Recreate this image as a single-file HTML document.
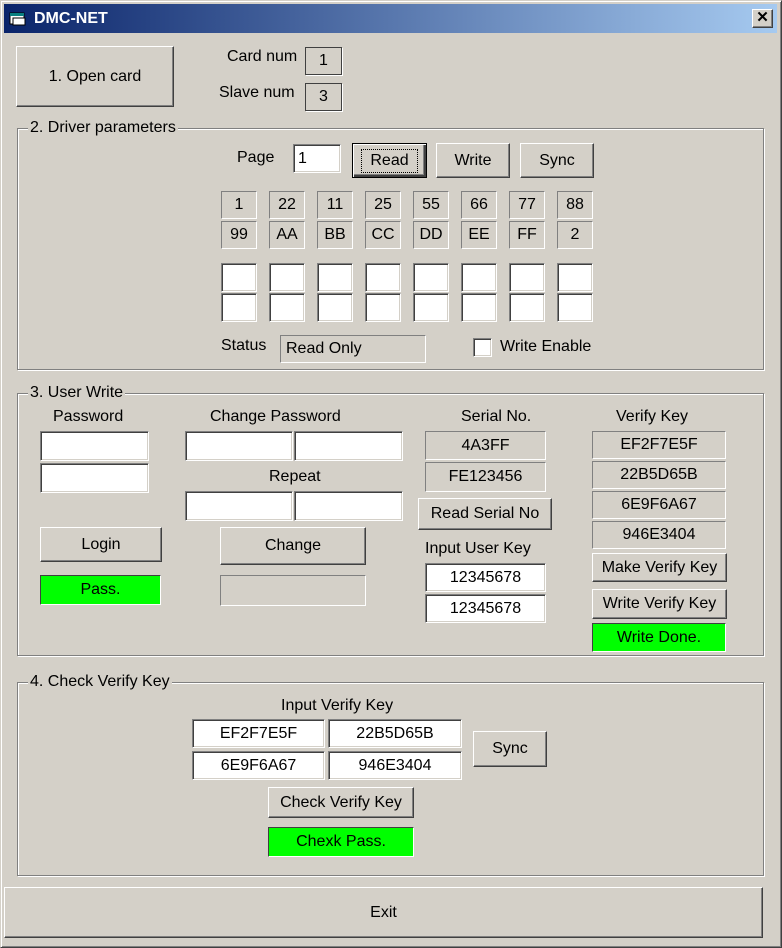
<!DOCTYPE html>
<html><head><meta charset="utf-8"><style>
*{box-sizing:border-box;margin:0;padding:0}
body{width:782px;height:948px;background:#d4d0c8;font-family:"Liberation Sans",Arial,sans-serif;font-size:16px;color:#000;position:relative;overflow:hidden}
.a{position:absolute}
.win{left:0;top:0;width:782px;height:948px;border:1px solid #d4d0c8;border-right-color:#404040;border-bottom-color:#404040;box-shadow:inset 1px 1px #fff,inset -1px -1px #808080}
.title{left:4px;top:4px;width:773px;height:29px;background:linear-gradient(90deg,#0a246a,#a6caf0);color:#fff;font-weight:bold;font-size:16px;line-height:29px;padding-left:30px}
.close{left:752px;top:9px;width:21px;height:19px;background:#d4d0c8;border:1px solid #fff;border-right-color:#404040;border-bottom-color:#404040;box-shadow:inset -1px -1px #808080;text-align:center;font-weight:bold;font-size:15px;line-height:16px;color:#000}
.btn{border:1px solid #fff;border-right-color:#404040;border-bottom-color:#404040;box-shadow:inset -1px -1px #808080;display:flex;align-items:center;justify-content:center}
.def{border:1px solid #000;box-shadow:inset 1px 1px #fff,inset -2px -2px #404040,inset -3px -3px #808080}
.st{border:1px solid #808080;border-right-color:#fff;border-bottom-color:#fff;display:flex;align-items:center;justify-content:center}
.ed{background:#fff;border:1px solid #808080;border-right-color:#fff;border-bottom-color:#fff;box-shadow:inset 1px 1px #404040,inset -1px -1px #d4d0c8;display:flex;align-items:center;justify-content:center}
.g{border:1px solid #808080;box-shadow:inset 1px 1px #fff,1px 1px #fff}
.lg{background:#d4d0c8;padding:0 2px;line-height:18px}
.grn{background:#00ff00}
</style></head><body>
<div class="a win"></div>
<div class="a title">DMC-NET</div>
<svg class="a" style="left:9px;top:11px" width="18" height="15"><rect x="1" y="2" width="14" height="11" fill="#fff" stroke="#000"/><rect x="1" y="2" width="14" height="3" fill="#0a8080"/><rect x="4" y="7" width="12" height="7" fill="#fff" stroke="#000"/></svg>
<div class="a close">✕</div>

<div class="a btn" style="left:16px;top:46px;width:158px;height:61px">1. Open card</div>
<div class="a" style="left:227px;top:48px">Card num</div>
<div class="a st" style="left:305px;top:47px;width:37px;height:28px;border:1px solid #404040;box-shadow:1px 1px #fff">1</div>
<div class="a" style="left:219px;top:84px">Slave num</div>
<div class="a st" style="left:305px;top:83px;width:37px;height:28px;border:1px solid #404040;box-shadow:1px 1px #fff">3</div>

<!-- group 2 -->
<div class="a g" style="left:17px;top:128px;width:747px;height:242px"></div>
<div class="a lg" style="left:28px;top:119px">2. Driver parameters</div>
<div class="a" style="left:237px;top:149px">Page</div>
<div class="a ed" style="left:293px;top:144px;width:48px;height:29px;justify-content:flex-start;padding-left:4px">1</div>
<div class="a btn def" style="left:352px;top:143px;width:75px;height:35px"><span style="border:1px dotted #000;padding:2px 8px">Read</span></div>
<div class="a btn" style="left:436px;top:143px;width:74px;height:35px">Write</div>
<div class="a btn" style="left:520px;top:143px;width:74px;height:35px">Sync</div>

<div class="a st" style="left:221px;top:191px;width:36px;height:28px">1</div>
<div class="a st" style="left:269px;top:191px;width:36px;height:28px">22</div>
<div class="a st" style="left:317px;top:191px;width:36px;height:28px">11</div>
<div class="a st" style="left:365px;top:191px;width:36px;height:28px">25</div>
<div class="a st" style="left:413px;top:191px;width:36px;height:28px">55</div>
<div class="a st" style="left:461px;top:191px;width:36px;height:28px">66</div>
<div class="a st" style="left:509px;top:191px;width:36px;height:28px">77</div>
<div class="a st" style="left:557px;top:191px;width:36px;height:28px">88</div>
<div class="a st" style="left:221px;top:221px;width:36px;height:28px">99</div>
<div class="a st" style="left:269px;top:221px;width:36px;height:28px">AA</div>
<div class="a st" style="left:317px;top:221px;width:36px;height:28px">BB</div>
<div class="a st" style="left:365px;top:221px;width:36px;height:28px">CC</div>
<div class="a st" style="left:413px;top:221px;width:36px;height:28px">DD</div>
<div class="a st" style="left:461px;top:221px;width:36px;height:28px">EE</div>
<div class="a st" style="left:509px;top:221px;width:36px;height:28px">FF</div>
<div class="a st" style="left:557px;top:221px;width:36px;height:28px">2</div>

<div class="a ed" style="left:221px;top:263px;width:36px;height:29px"></div>
<div class="a ed" style="left:269px;top:263px;width:36px;height:29px"></div>
<div class="a ed" style="left:317px;top:263px;width:36px;height:29px"></div>
<div class="a ed" style="left:365px;top:263px;width:36px;height:29px"></div>
<div class="a ed" style="left:413px;top:263px;width:36px;height:29px"></div>
<div class="a ed" style="left:461px;top:263px;width:36px;height:29px"></div>
<div class="a ed" style="left:509px;top:263px;width:36px;height:29px"></div>
<div class="a ed" style="left:557px;top:263px;width:36px;height:29px"></div>
<div class="a ed" style="left:221px;top:293px;width:36px;height:29px"></div>
<div class="a ed" style="left:269px;top:293px;width:36px;height:29px"></div>
<div class="a ed" style="left:317px;top:293px;width:36px;height:29px"></div>
<div class="a ed" style="left:365px;top:293px;width:36px;height:29px"></div>
<div class="a ed" style="left:413px;top:293px;width:36px;height:29px"></div>
<div class="a ed" style="left:461px;top:293px;width:36px;height:29px"></div>
<div class="a ed" style="left:509px;top:293px;width:36px;height:29px"></div>
<div class="a ed" style="left:557px;top:293px;width:36px;height:29px"></div>

<div class="a" style="left:221px;top:337px">Status</div>
<div class="a st" style="left:280px;top:335px;width:146px;height:28px;justify-content:flex-start;padding-left:5px">Read Only</div>
<div class="a ed" style="left:473px;top:338px;width:19px;height:19px"></div>
<div class="a" style="left:500px;top:338px">Write Enable</div>

<!-- group 3 -->
<div class="a g" style="left:17px;top:393px;width:747px;height:263px"></div>
<div class="a lg" style="left:28px;top:384px">3. User Write</div>
<div class="a" style="left:53px;top:408px">Password</div>
<div class="a ed" style="left:40px;top:431px;width:109px;height:30px"></div>
<div class="a ed" style="left:40px;top:463px;width:109px;height:30px"></div>
<div class="a" style="left:210px;top:408px">Change Password</div>
<div class="a ed" style="left:185px;top:431px;width:108px;height:30px"></div>
<div class="a ed" style="left:294px;top:431px;width:109px;height:30px"></div>
<div class="a" style="left:269px;top:468px">Repeat</div>
<div class="a ed" style="left:185px;top:491px;width:108px;height:30px"></div>
<div class="a ed" style="left:294px;top:491px;width:109px;height:30px"></div>
<div class="a btn" style="left:40px;top:527px;width:122px;height:35px">Login</div>
<div class="a st grn" style="left:40px;top:575px;width:121px;height:30px;border-top-color:#404040;border-left-color:#404040">Pass.</div>
<div class="a btn" style="left:220px;top:527px;width:146px;height:38px">Change</div>
<div class="a st" style="left:220px;top:575px;width:146px;height:31px"></div>

<div class="a" style="left:461px;top:408px">Serial No.</div>
<div class="a st" style="left:425px;top:431px;width:121px;height:29px">4A3FF</div>
<div class="a st" style="left:425px;top:462px;width:121px;height:30px">FE123456</div>
<div class="a btn" style="left:418px;top:498px;width:134px;height:32px">Read Serial No</div>
<div class="a" style="left:425px;top:540px">Input User Key</div>
<div class="a ed" style="left:425px;top:563px;width:121px;height:29px">12345678</div>
<div class="a ed" style="left:425px;top:594px;width:121px;height:29px">12345678</div>

<div class="a" style="left:616px;top:408px">Verify Key</div>
<div class="a st" style="left:592px;top:431px;width:134px;height:28px">EF2F7E5F</div>
<div class="a st" style="left:592px;top:461px;width:134px;height:28px">22B5D65B</div>
<div class="a st" style="left:592px;top:491px;width:134px;height:28px">6E9F6A67</div>
<div class="a st" style="left:592px;top:521px;width:134px;height:28px">946E3404</div>
<div class="a btn" style="left:592px;top:553px;width:135px;height:29px">Make Verify Key</div>
<div class="a btn" style="left:592px;top:589px;width:135px;height:30px">Write Verify Key</div>
<div class="a st grn" style="left:592px;top:623px;width:134px;height:29px;border-top-color:#404040;border-left-color:#404040">Write Done.</div>

<!-- group 4 -->
<div class="a g" style="left:17px;top:682px;width:747px;height:194px"></div>
<div class="a lg" style="left:28px;top:673px">4. Check Verify Key</div>
<div class="a" style="left:281px;top:697px">Input Verify Key</div>
<div class="a ed" style="left:192px;top:719px;width:133px;height:29px">EF2F7E5F</div>
<div class="a ed" style="left:328px;top:719px;width:134px;height:29px">22B5D65B</div>
<div class="a ed" style="left:192px;top:751px;width:133px;height:29px">6E9F6A67</div>
<div class="a ed" style="left:328px;top:751px;width:134px;height:29px">946E3404</div>
<div class="a btn" style="left:473px;top:731px;width:74px;height:36px">Sync</div>
<div class="a btn" style="left:268px;top:787px;width:146px;height:31px">Check Verify Key</div>
<div class="a st grn" style="left:268px;top:827px;width:146px;height:30px;border-top-color:#404040;border-left-color:#404040">Chexk Pass.</div>

<div class="a btn" style="left:4px;top:887px;width:759px;height:51px">Exit</div>
</body></html>
